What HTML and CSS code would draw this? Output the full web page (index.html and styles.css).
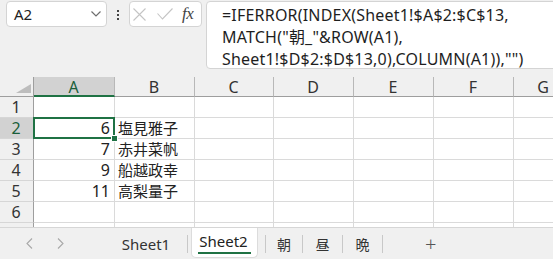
FILE: index.html
```html
<!DOCTYPE html>
<html lang="ja">
<head>
    <meta charset="UTF-8">
    <title>Sheet2</title>
    <link rel="stylesheet" href="styles.css">
</head>
<body>
    <div class="toolbar">
        <div class="namebox">
            <span>A2</span>
            <svg width="10" height="6" viewBox="0 0 10 6"><path d="M0.5 0.5 L5 5 L9.5 0.5" fill="none" stroke="#6e6e6e" stroke-width="1.2"/></svg>
        </div>
        <div class="dots"><i></i><i></i><i></i></div>
        <div class="fxbox">
            <svg width="13" height="13" viewBox="0 0 13 13"><path d="M0.5 0.5 L12.5 12.5 M12.5 0.5 L0.5 12.5" stroke="#c4c4c4" stroke-width="1.1"/></svg>
            <svg width="16" height="12" viewBox="0 0 16 12"><path d="M0.5 5.5 L5.5 11 L15.5 0.5" fill="none" stroke="#c4c4c4" stroke-width="1.1"/></svg>
            <span class="fx">fx</span>
        </div>
        <div class="formula">
            <div>=IFERROR(INDEX(Sheet1!$A$2:$C$13,</div>
            <div>MATCH("朝_"&amp;ROW(A1),</div>
            <div>Sheet1!$D$2:$D$13,0),COLUMN(A1)),"")</div>
        </div>
    </div>

    <div class="sheet">
        <div class="cell hd corner"><svg width="15" height="9" viewBox="0 0 15 9"><path d="M15 0 L15 9 L0 9 Z" fill="#bdbdbd"/></svg></div>
        <div class="cell hd sel-col">A</div>
        <div class="cell hd">B</div>
        <div class="cell hd">C</div>
        <div class="cell hd">D</div>
        <div class="cell hd">E</div>
        <div class="cell hd">F</div>
        <div class="cell hd">G</div>

        <div class="cell rh">1</div>
        <div class="cell"></div><div class="cell"></div><div class="cell"></div><div class="cell"></div><div class="cell"></div><div class="cell"></div><div class="cell"></div>

        <div class="cell rh sel-row">2</div>
        <div class="cell num active">6</div><div class="cell">塩見雅子</div><div class="cell"></div><div class="cell"></div><div class="cell"></div><div class="cell"></div><div class="cell"></div>

        <div class="cell rh">3</div>
        <div class="cell num">7</div><div class="cell">赤井菜帆</div><div class="cell"></div><div class="cell"></div><div class="cell"></div><div class="cell"></div><div class="cell"></div>

        <div class="cell rh">4</div>
        <div class="cell num">9</div><div class="cell">船越政幸</div><div class="cell"></div><div class="cell"></div><div class="cell"></div><div class="cell"></div><div class="cell"></div>

        <div class="cell rh">5</div>
        <div class="cell num">11</div><div class="cell">高梨量子</div><div class="cell"></div><div class="cell"></div><div class="cell"></div><div class="cell"></div><div class="cell"></div>

        <div class="cell rh">6</div>
        <div class="cell"></div><div class="cell"></div><div class="cell"></div><div class="cell"></div><div class="cell"></div><div class="cell"></div><div class="cell"></div>

        <div class="cell rh"></div>
        <div class="cell"></div><div class="cell"></div><div class="cell"></div><div class="cell"></div><div class="cell"></div><div class="cell"></div><div class="cell"></div>
    </div>

    <div class="tabs">
        <div class="nav">
            <svg width="7" height="11" viewBox="0 0 7 11"><path d="M6 0.5 L1 5.5 L6 10.5" fill="none" stroke="#a8a8a8" stroke-width="1.1"/></svg>
            <svg width="7" height="11" viewBox="0 0 7 11"><path d="M1 0.5 L6 5.5 L1 10.5" fill="none" stroke="#a8a8a8" stroke-width="1.1"/></svg>
        </div>
        <div class="tab tab-wide">Sheet1</div>
        <div class="sep"></div>
        <div class="tab tab-active"><span>Sheet2</span></div>
        <div class="sep sep-gap"></div>
        <div class="tab tab-jp">朝</div>
        <div class="sep"></div>
        <div class="tab tab-jp">昼</div>
        <div class="sep"></div>
        <div class="tab tab-jp">晩</div>
        <div class="sep"></div>
        <div class="add">+</div>
    </div>
</body>
</html>
```

FILE: styles.css
```css
body {
    margin: 0;
    width: 553px;
    height: 259px;
    overflow: hidden;
    background-color: #f0f0f0;
    color: #222;
    font-family: "Noto Sans", "Noto Sans CJK JP", sans-serif;
}

/* formula bar */

.toolbar {
    display: flex;
    align-items: flex-start;
    height: 77px;
    padding: 1px 0 0 6px;
    box-sizing: border-box;
}

.namebox {
    width: 101px;
    height: 26px;
    box-sizing: border-box;
    background-color: #fff;
    border: 1px solid #d4d4d4;
    border-radius: 4px;
    display: flex;
    align-items: center;
    justify-content: space-between;
    padding: 0 5px 0 7px;
    font-size: 15px;
}

.dots {
    width: 22px;
    display: flex;
    flex-direction: column;
    align-items: center;
    gap: 2px;
    padding-top: 9px;
}

.dots i {
    width: 2px;
    height: 2px;
    background-color: #444;
}

.fxbox {
    width: 73px;
    height: 26px;
    box-sizing: border-box;
    background-color: #fff;
    border: 1px solid #d4d4d4;
    border-radius: 4px;
    display: flex;
    align-items: center;
    padding: 0 0 0 3px;
}

.fxbox svg:nth-child(2) {
    margin-left: 11px;
}

.fx {
    margin-left: 9px;
    font-family: "Liberation Serif", serif;
    font-style: italic;
    font-size: 17px;
    color: #444;
    letter-spacing: -0.5px;
}

.formula {
    flex: 1;
    height: 68px;
    margin: 0 -6px 0 4px;
    box-sizing: border-box;
    background-color: #fff;
    border: 1px solid #d4d4d4;
    border-radius: 4px;
    padding: 2px 0 0 15px;
    font-size: 16px;
    letter-spacing: 0.2px;
    line-height: 22px;
    color: #1e1e1e;
}

/* grid */

.sheet {
    height: 150px;
    overflow: hidden;
    background-color: #fff;
    display: grid;
    grid-template-columns: 34px 81px 80px 79px 80px 80px 80px 60px;
    grid-template-rows: 20px repeat(7, 21px);
}

.cell {
    position: relative;
    box-sizing: border-box;
    border-right: 1px solid #dadada;
    border-bottom: 1px solid #dadada;
    padding: 0 4px 0 3px;
    font-family: "Noto Sans CJK JP", sans-serif;
    font-size: 15px;
    line-height: 20px;
    white-space: nowrap;
}

.hd {
    background-color: #f0f0f0;
    text-align: center;
    border-right-color: #b8b8b8;
    border-bottom-color: #9e9e9e;
    color: #333;
    font-family: "Noto Sans", sans-serif;
    font-size: 16px;
}

.corner {
    display: flex;
    align-items: flex-end;
    justify-content: flex-end;
    padding: 0 2px 3px 0;
    border-right-color: #9e9e9e;
}

.rh {
    background-color: #f0f0f0;
    text-align: center;
    border-right-color: #9e9e9e;
    border-bottom-color: #d6d6d6;
    color: #333;
    font-family: "Noto Sans", sans-serif;
    font-size: 16px;
}

.sel-col {
    background-color: #d2d2d2;
    border-bottom: 2px solid #1f7244;
    color: #1a5e3a;
}

.sel-row {
    background-color: #d2d2d2;
    color: #1a5e3a;
}

.num {
    text-align: right;
    font-family: "Noto Sans", sans-serif;
    font-size: 16px;
}

.active::after {
    content: "";
    position: absolute;
    top: -1px;
    left: -1px;
    right: -1px;
    bottom: -1px;
    border: 2px solid #1f7244;
}

.active::before {
    content: "";
    position: absolute;
    right: -4px;
    bottom: -4px;
    width: 5px;
    height: 5px;
    background-color: #1f7244;
    border: 1px solid #fff;
    z-index: 1;
}

/* sheet tabs */

.tabs {
    height: 31px;
    border-top: 1px solid #d6d6d6;
    display: flex;
    align-items: center;
    font-size: 15px;
    color: #333;
}

.nav {
    width: 105px;
    display: flex;
    gap: 24px;
    padding-left: 26px;
    box-sizing: border-box;
}

.tab {
    height: 100%;
    display: flex;
    align-items: center;
    justify-content: center;
}

.tab-wide {
    width: 82px;
}

.tab-active {
    width: 67px;
    height: 30px;
    margin: 0 0 0 3px;
    align-self: flex-start;
    box-sizing: border-box;
    background-color: #fff;
    border: 1px solid #dcdcdc;
    border-top: none;
    border-radius: 0 0 5px 5px;
    align-items: flex-start;
}

.tab-active span {
    padding-top: 3px;
    line-height: 21px;
    border-bottom: 2px solid #1f7244;
    color: #222;
    padding-left: 1px;
    padding-right: 3px;
}

.tab-jp {
    width: 36px;
    font-family: "Noto Sans CJK JP", sans-serif;
    font-size: 14px;
}

.sep {
    width: 1px;
    height: 18px;
    background-color: #c8c8c8;
}

.sep-gap {
    margin-left: 7px;
}

.tab-jp + .sep + .tab-jp {
    width: 39px;
}

.add {
    margin-left: 42px;
    font-size: 20px;
    font-weight: 300;
    color: #555;
}
```
